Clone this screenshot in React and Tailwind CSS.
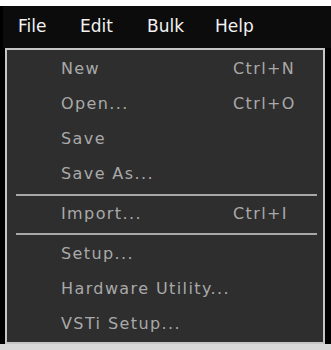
const TOP_MENUS = [
  { label: 'File', className: 'w-[77px] pl-[15px]' },
  { label: 'Edit', className: 'w-[67px]' },
  { label: 'Bulk', className: 'w-[68px]' },
  { label: 'Help', className: 'w-[60px]' },
];

const FILE_MENU = [
  { label: 'New', shortcut: 'Ctrl+N' },
  { label: 'Open...', shortcut: 'Ctrl+O' },
  { label: 'Save' },
  { label: 'Save As...' },
  { divider: true, className: 'mt-[3px]' },
  { label: 'Import...', shortcut: 'Ctrl+I' },
  { divider: true, className: 'mt-[2px] mb-[1px]' },
  { label: 'Setup...' },
  { label: 'Hardware Utility...' },
  { label: 'VSTi Setup...' },
];

function MenuRow({ label, shortcut }) {
  return (
    <div className="flex items-center h-[35px] pl-[54px] text-[16px] tracking-[1.4px] text-[#a9a9a9]">
      <span className="w-[172px]">{label}</span>
      {shortcut && <span>{shortcut}</span>}
    </div>
  );
}

export default function App() {
  return (
    <div
      className="w-[331px] h-[350px] bg-black overflow-hidden flex flex-col"
      style={{ fontFamily: '"DejaVu Sans", Verdana, sans-serif' }}
    >
      <div className="h-[6px] bg-white shrink-0" />

      {/* Top menu bar */}
      <div className="h-[42px] shrink-0 flex items-center bg-[#0c0c0c] ml-[3px] text-[17px] text-[#f2f2f2]">
        {TOP_MENUS.map((m) => (
          <div key={m.label} className={`h-full flex items-center ${m.className}`}>
            {m.label}
          </div>
        ))}
      </div>

      {/* File dropdown */}
      <div className="ml-[5px] w-[320px] h-[296px] shrink-0 border-2 border-[#c6c6c6] bg-[#2e2e2e] pt-[1px]">
        {FILE_MENU.map((item, i) =>
          item.divider ? (
            <div key={i} className={`h-[2px] ml-[9px] mr-[6px] bg-[#a8a8a8] ${item.className}`} />
          ) : (
            <MenuRow key={i} {...item} />
          )
        )}
      </div>

      <div className="flex-1 bg-[#d8d8d8]" />
    </div>
  );
}
